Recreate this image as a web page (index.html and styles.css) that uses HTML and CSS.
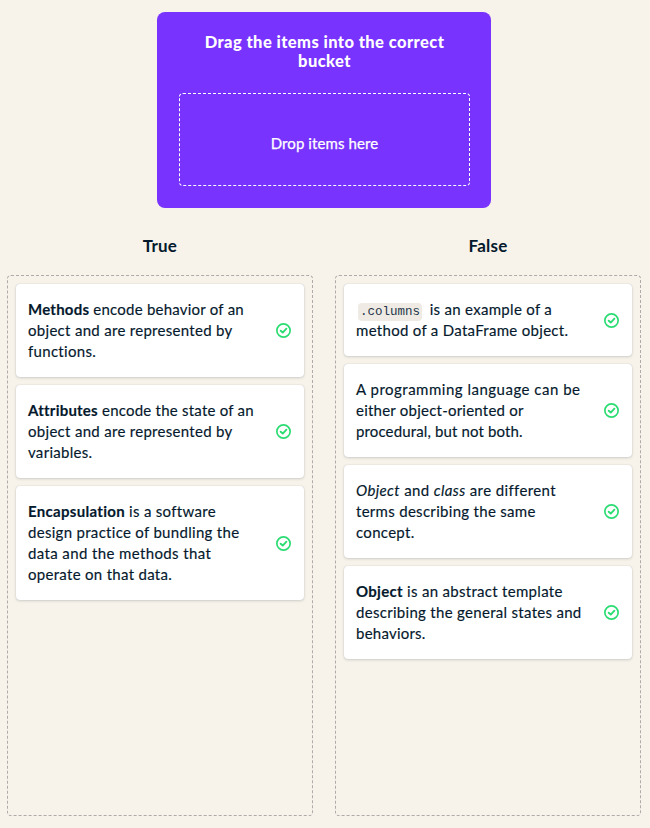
FILE: index.html
```html
<!DOCTYPE html>
<html lang="en">
<head>
<meta charset="utf-8">
<title>Drag and drop exercise</title>
<link rel="stylesheet" href="styles.css">
</head>
<body>
<svg class="defs" aria-hidden="true">
  <symbol id="check" viewBox="0 0 16 16">
    <circle cx="8" cy="8" r="7.1" stroke-width="1.8"/>
    <path d="M5 8.2l2.2 2 3.9-4.2" stroke-width="2"/>
  </symbol>
</svg>
<main>
  <section class="source">
    <h1>Drag the items into the correct<br>bucket</h1>
    <div class="drop">Drop items here</div>
  </section>
  <div class="columns">
    <section class="column">
      <h2>True</h2>
      <div class="bucket">
        <article class="card"><p><span class="snug"><b>Methods</b> encode behavior of an</span><br>object and are represented by<br>functions.</p><svg class="icon"><use href="#check"/></svg></article>
        <article class="card"><p><span class="snug"><b>Attributes</b> encode the state of an</span><br>object and are represented by<br>variables.</p><svg class="icon"><use href="#check"/></svg></article>
        <article class="card"><p><b>Encapsulation</b> is a software<br>design practice of bundling the<br><span class="airy">data and the methods that</span><br>operate on that data.</p><svg class="icon"><use href="#check"/></svg></article>
      </div>
    </section>
    <section class="column">
      <h2>False</h2>
      <div class="bucket">
        <article class="card"><p><code>.columns</code> is an example of a<br>method of a DataFrame object.</p><svg class="icon"><use href="#check"/></svg></article>
        <article class="card"><p><span class="wide">A programming language can be</span><br><span class="snug">either object-oriented or</span><br><span class="tight">procedural, but not both.</span></p><svg class="icon"><use href="#check"/></svg></article>
        <article class="card"><p><span class="airy"><i>Object</i> and <i>class</i> are different</span><br>terms describing the same<br>concept.</p><svg class="icon"><use href="#check"/></svg></article>
        <article class="card"><p><b>Object</b> is an abstract template<br>describing the general states and<br><span class="snug">behaviors.</span></p><svg class="icon"><use href="#check"/></svg></article>
      </div>
    </section>
  </div>
</main>
</body>
</html>
```
FILE: styles.css
```css
* { box-sizing: border-box; }
body {
  margin: 0;
  background: #f7f3eb;
  color: #05192d;
  font-family: Lato, sans-serif;
  font-size: 15px;
  line-height: 21px;
}
.defs { position: absolute; width: 0; height: 0; }
main { height: 828px; padding: 12px 9px 12px 7px; display: flex; flex-direction: column; }
.source {
  width: 334px;
  height: 196px;
  margin-left: 150px;
  padding: 21px 21px 22px 22px;
  border-radius: 8px;
  background: #7933ff;
  color: #fff;
  text-align: center;
}
h1 { margin: 0 0 22px; font-size: 16.5px; line-height: 19px; font-weight: 900; letter-spacing: 0.42px; }
.drop {
  height: 93px;
  padding-top: 39px;
  border: 1px dashed #fff;
  border-radius: 4px;
  letter-spacing: 0.1px;
  -webkit-text-stroke: 0.25px currentColor;
}
.columns { flex: 1; display: grid; grid-template-columns: 306px 306px; column-gap: 22px; }
.column { display: flex; flex-direction: column; }
h2 { margin: 28px 0 19px; font-size: 17px; line-height: 20px; font-weight: 700; text-align: center; letter-spacing: 0.2px; }
.bucket {
  flex: 1;
  display: flex;
  flex-direction: column;
  gap: 8px;
  padding: 8px;
  border: 1px dashed #b0aaa8;
  border-radius: 4px;
}
.card {
  display: flex;
  align-items: center;
  justify-content: space-between;
  padding: 15px 12px;
  border-radius: 4px;
  background: #fff;
  box-shadow: 0 0 1px rgba(5, 25, 45, .2), 0 1px 3px rgba(5, 25, 45, .16);
}
p { margin: 0; white-space: nowrap; letter-spacing: 0.3px; -webkit-text-stroke: 0.15px currentColor; }
.tight { letter-spacing: 0.13px; }
.snug { letter-spacing: 0.23px; }
.airy { letter-spacing: 0.38px; }
.wide { letter-spacing: 0.5px; }
code {
  margin: 0 3.5px 0 2px;
  padding: 2px;
  border-radius: 4px;
  background: #efebe4;
  color: #26364a;
  font: 12.5px/12px "Liberation Mono", monospace;
  letter-spacing: 0;
  -webkit-text-stroke: 0;
}
.icon { width: 15px; height: 15px; margin-right: 1px; flex: none; fill: none; stroke: #2bdc73; stroke-linecap: round; stroke-linejoin: round; }
```
